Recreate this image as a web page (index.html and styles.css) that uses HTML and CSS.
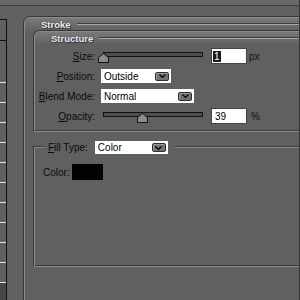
FILE: index.html
```html
<!DOCTYPE html>
<html>
<head>
<meta charset="utf-8">
<link rel="stylesheet" href="styles.css">
</head>
<body>
<div class="page">
  <div class="topbar"></div>
  <div class="main">
    <div class="ruler">
      <div class="rbox"></div>
      <div class="rgap"></div>
      <div class="rticks"></div>
      <div class="rend"></div>
    </div>
    <div class="stroke">
      <div class="stroke-in">
        <div class="hdr hdr-top"><span class="title">Stroke</span><span class="rule"></span></div>
        <div class="structure">
          <div class="structure-in">
            <div class="hdr hdr-sub"><span class="title">Structure</span><span class="rule"></span></div>
            <div class="rows">
              <span class="lbl"><u>S</u>ize:</span>
              <div class="ctl">
                <div class="slider">
                  <div class="track"></div>
                  <svg class="thumb thumb-size" width="11" height="10" viewBox="0 0 11 10"><path d="M5.5 0.5 L10.5 4.5 V9.5 H0.5 V4.5 Z" fill="#8c8c8c" stroke="#111" stroke-width="1"/></svg>
                </div>
                <div class="num"><span class="sel">1</span></div>
                <span class="unit">px</span>
              </div>

              <span class="lbl"><u>P</u>osition:</span>
              <div class="ctl">
                <div class="dd dd-pos"><span>Outside</span><span class="btn"><svg width="7" height="4" viewBox="0 0 7 4"><path d="M0.5 0.5 L3.5 3.5 L6.5 0.5" fill="none" stroke="#000" stroke-width="1.2"/></svg></span></div>
              </div>

              <span class="lbl"><u>B</u>lend Mode:</span>
              <div class="ctl">
                <div class="dd dd-blend"><span>Normal</span><span class="btn"><svg width="7" height="4" viewBox="0 0 7 4"><path d="M0.5 0.5 L3.5 3.5 L6.5 0.5" fill="none" stroke="#000" stroke-width="1.2"/></svg></span></div>
              </div>

              <span class="lbl"><u>O</u>pacity:</span>
              <div class="ctl">
                <div class="slider">
                  <div class="track"></div>
                  <svg class="thumb thumb-op" width="11" height="10" viewBox="0 0 11 10"><path d="M5.5 0.5 L10.5 4.5 V9.5 H0.5 V4.5 Z" fill="#8c8c8c" stroke="#111" stroke-width="1"/></svg>
                </div>
                <div class="num"><span class="val">39</span></div>
                <span class="unit pct">%</span>
              </div>
            </div>
          </div>
        </div>

        <div class="fill">
          <div class="fill-head">
            <span class="seg"></span>
            <span class="lbl fill-lbl"><u>F</u>ill Type:</span>
            <div class="dd dd-fill"><span>Color</span><span class="btn"><svg width="7" height="4" viewBox="0 0 7 4"><path d="M0.5 0.5 L3.5 3.5 L6.5 0.5" fill="none" stroke="#000" stroke-width="1.2"/></svg></span></div>
            <span class="hline"></span>
          </div>
          <div class="fill-body">
            <div class="color-row">
              <span class="lbl">Color:</span>
              <span class="swatch"></span>
            </div>
          </div>
        </div>
      </div>
    </div>
  </div>
</div>
</body>
</html>
```

FILE: styles.css
```css
html, body {
  margin: 0;
  padding: 0;
  background: #606060;
}
.page {
  width: 299px;
  height: 300px;
  border-right: 1px solid #333;
  background: #606060;
  overflow: hidden;
  display: flex;
  flex-direction: column;
  font-family: "Liberation Sans", Arial, sans-serif;
  font-size: 10px;
  color: #000;
}
.topbar {
  height: 5px;
  background: #686868;
  border-bottom: 1px solid #3c3c3c;
  flex: none;
}
.main {
  flex: 1;
  display: flex;
}
.ruler {
  width: 6px;
  margin-top: 13px;
  border-top: 1px solid #111;
  border-right: 1px solid #111;
  display: flex;
  flex-direction: column;
  flex: none;
}
.rbox {
  height: 20px;
  border-bottom: 1px solid #111;
}
.rgap {
  height: 22px;
}
.rticks {
  height: 220px;
  background: repeating-linear-gradient(to bottom, transparent 0 19px, #e4e4e4 19px 20px);
}
.rend {
  flex: 1;
  background: #474747;
}
.stroke {
  flex: 1;
  margin-left: 16px;
  margin-top: 10px;
  border-left: 1px solid #383838;
  border-top: 1px solid #383838;
  border-top-left-radius: 7px;
}
.stroke-in {
  height: 100%;
  border-left: 1px solid #8c8c8c;
  border-top: 1px solid #8c8c8c;
  border-top-left-radius: 6px;
}
.hdr {
  height: 12px;
  display: flex;
  align-items: center;
  padding-left: 16px;
  background: linear-gradient(#7a7a7a, #626262);
  border-top-left-radius: 5px;
}
.title {
  font-weight: bold;
  font-size: 9.5px;
  color: #f0f0fa;
  text-shadow: 0 0 1px #222, 1px 1px 1px #333;
}
.rule {
  flex: 1;
  height: 1px;
  margin-left: 6px;
  background: #a8a8a8;
  box-shadow: 0 -1px 0 #3e3e3e;
}
.structure {
  margin-left: 8px;
  border-left: 1px solid #383838;
  border-top: 1px solid #383838;
  border-bottom: 1px solid #8c8c8c;
  border-top-left-radius: 7px;
}
.structure-in {
  border-left: 1px solid #8c8c8c;
  border-top: 1px solid #8c8c8c;
  border-bottom: 1px solid #383838;
  border-top-left-radius: 6px;
}
.rows {
  display: grid;
  grid-template-columns: 60px auto;
  grid-auto-rows: 20px;
  column-gap: 6px;
  align-items: center;
  padding: 2px 0 4px;
}
.lbl {
  text-align: right;
  white-space: nowrap;
  color: #0a0a0a;
}
.lbl u {
  text-underline-offset: 1px;
}
.ctl {
  display: flex;
  align-items: center;
  height: 20px;
}
.slider {
  position: relative;
  width: 100px;
  height: 20px;
  margin-left: 2px;
}
.track {
  margin-top: 6px;
  height: 5px;
  box-sizing: border-box;
  border: 1px solid #111;
  background: #4e4e4e;
}
.thumb {
  position: absolute;
  top: 7px;
}
.thumb-size { left: -5px; }
.thumb-op { left: 34px; }
.num {
  width: 36px;
  height: 16px;
  box-sizing: border-box;
  margin-left: 8px;
  background: #fff;
  border: 1px solid #444;
  padding-left: 1px;
  display: flex;
  align-items: center;
  font-size: 10px;
  color: #000;
}
.sel {
  display: inline-block;
  height: 11px;
  line-height: 11px;
  padding: 0 1px;
  background: #1a1a1a;
  color: #fff;
}
.val {
  padding-left: 2px;
}
.unit {
  margin-left: 2px;
  color: #111;
}
.pct {
  margin-left: 4px;
}
.dd {
  height: 14px;
  box-sizing: border-box;
  background: #fff;
  display: flex;
  align-items: center;
  justify-content: space-between;
  padding-left: 3px;
  color: #000;
  font-size: 10px;
}
.dd-pos { width: 70px; }
.dd-blend { width: 93px; }
.dd-fill { width: 73px; height: 13px; margin-left: 7px; }
.btn {
  width: 14px;
  height: 9px;
  margin-right: 2px;
  box-sizing: border-box;
  background: #727272;
  border: 1px solid #2e2e2e;
  border-radius: 2px;
  box-shadow: inset 1px 1px 0 #9a9a9a;
  display: flex;
  align-items: center;
  justify-content: center;
}
.fill {
  margin-left: 8px;
  margin-top: 9px;
}
.fill-head {
  display: flex;
  align-items: center;
  height: 13px;
}
.seg {
  align-self: flex-end;
  width: 9px;
  height: 7px;
  border-top: 1px solid #383838;
  border-left: 1px solid #383838;
  box-shadow: inset 1px 1px 0 #8c8c8c;
  flex: none;
}
.fill-lbl {
  margin-left: 5px;
}
.hline {
  flex: 1;
  align-self: flex-end;
  margin-bottom: 6px;
  margin-left: 7px;
  height: 2px;
  background: linear-gradient(#383838 0 1px, #8c8c8c 1px 2px);
}
.fill-body {
  border-left: 1px solid #383838;
  border-bottom: 1px solid #8c8c8c;
  box-shadow: inset 1px 0 0 #8c8c8c, inset 0 -1px 0 #383838;
  padding-top: 10px;
  box-sizing: border-box;
  height: 113px;
}
.color-row {
  display: flex;
  align-items: center;
  padding-left: 9px;
  gap: 2px;
}
.swatch {
  width: 31px;
  height: 16px;
  background: #030303;
}
```
